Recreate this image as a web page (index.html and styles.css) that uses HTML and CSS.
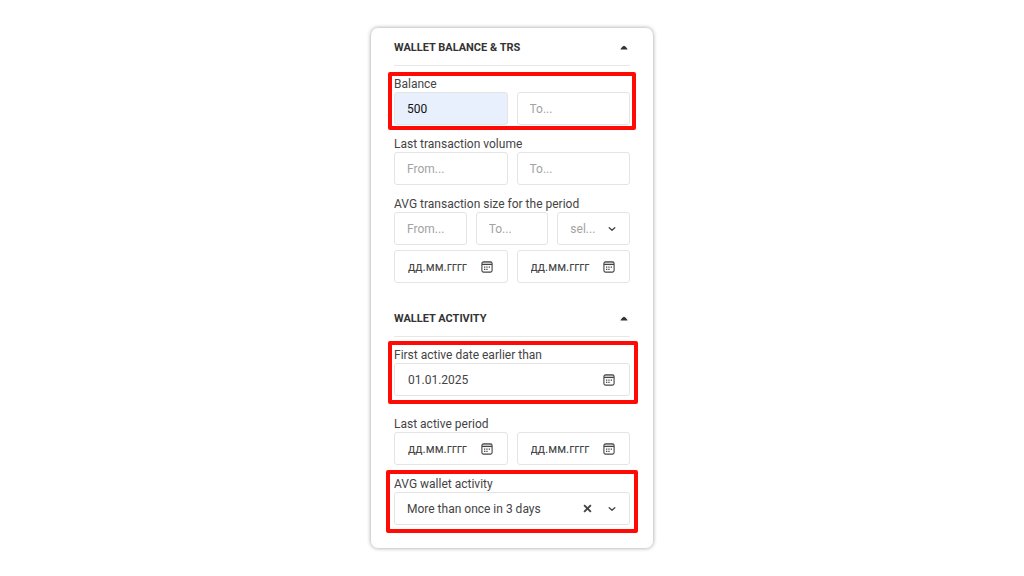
FILE: index.html
```html
<!DOCTYPE html>
<html lang="en">
<head>
  <meta charset="UTF-8" />
  <meta name="viewport" content="width=device-width, initial-scale=1" />
  <title>Wallet filters</title>
  <link rel="stylesheet" href="styles.css">
</head>
<body>
  <svg class="sprite" aria-hidden="true">
    <symbol id="icon-caret" viewBox="0 0 8 5">
      <path d="M0.5 4.5 C0.5 3.6 3 1 4 0.8 C5 1 7.5 3.6 7.5 4.5 Z" fill="currentColor"/>
    </symbol>
    <symbol id="icon-chevron" viewBox="0 0 8 8">
      <path d="M1.2 2.7 L4 5.3 L6.8 2.7" fill="none" stroke="currentColor" stroke-width="1.3" stroke-linecap="round" stroke-linejoin="round"/>
    </symbol>
    <symbol id="icon-cross" viewBox="0 0 8 8">
      <path d="M1 1 L7 7 M7 1 L1 7" fill="none" stroke="currentColor" stroke-width="1.7"/>
    </symbol>
    <symbol id="icon-calendar" viewBox="0 0 12 12">
      <rect x="0.9" y="0.9" width="10.2" height="10.2" rx="1.6" fill="none" stroke="currentColor" stroke-width="1.1"/>
      <path d="M1 3.5 H11" stroke="currentColor" stroke-width="1.1"/>
      <path d="M1 1h10v2.5h-10z" fill="currentColor" opacity="0.25"/>
      <path d="M5.3 5.4h1.3v1.3h-1.3z M7.7 5.4h1.3v1.3h-1.3z M3 7.7h1.3v1.3h-1.3z M5.3 7.7h1.3v1.3h-1.3z M3 5.4h1.3v1.3h-1.3z" fill="currentColor"/>
    </symbol>
  </svg>

  <form class="panel">
    <section class="section">
      <h2 class="section-title">
        <button type="button" class="toggle" aria-expanded="true">
          WALLET BALANCE &amp; TRS
          <svg class="caret"><use href="#icon-caret"/></svg>
        </button>
      </h2>

      <div class="group marked marked-balance">
        <label for="balance-from">Balance</label>
        <div class="row">
          <div class="field filled"><input id="balance-from" type="text" value="500"></div>
          <div class="field"><input type="text" placeholder="To..." aria-label="Balance to"></div>
        </div>
      </div>

      <div class="group">
        <label for="volume-from">Last transaction volume</label>
        <div class="row">
          <div class="field"><input id="volume-from" type="text" placeholder="From..."></div>
          <div class="field"><input type="text" placeholder="To..." aria-label="Volume to"></div>
        </div>
      </div>

      <div class="group">
        <label for="size-from">AVG transaction size for the period</label>
        <div class="row">
          <div class="field"><input id="size-from" type="text" placeholder="From..."></div>
          <div class="field"><input type="text" placeholder="To..." aria-label="Size to"></div>
          <div class="field">
            <select class="empty" aria-label="Token"><option>sel...</option></select>
            <svg class="chevron"><use href="#icon-chevron"/></svg>
          </div>
        </div>
        <div class="row">
          <div class="field date">
            <input type="text" placeholder="дд.мм.гггг" aria-label="Period start">
            <button type="button" class="icon-btn" aria-label="Open calendar"><svg class="calendar"><use href="#icon-calendar"/></svg></button>
          </div>
          <div class="field date">
            <input type="text" placeholder="дд.мм.гггг" aria-label="Period end">
            <button type="button" class="icon-btn" aria-label="Open calendar"><svg class="calendar"><use href="#icon-calendar"/></svg></button>
          </div>
        </div>
      </div>
    </section>

    <section class="section">
      <h2 class="section-title">
        <button type="button" class="toggle" aria-expanded="true">
          WALLET ACTIVITY
          <svg class="caret"><use href="#icon-caret"/></svg>
        </button>
      </h2>

      <div class="group marked marked-first">
        <label for="first-active">First active date earlier than</label>
        <div class="row">
          <div class="field date">
            <input id="first-active" type="text" value="01.01.2025">
            <button type="button" class="icon-btn" aria-label="Open calendar"><svg class="calendar"><use href="#icon-calendar"/></svg></button>
          </div>
        </div>
      </div>

      <div class="group">
        <label for="last-active">Last active period</label>
        <div class="row">
          <div class="field date">
            <input id="last-active" type="text" placeholder="дд.мм.гггг">
            <button type="button" class="icon-btn" aria-label="Open calendar"><svg class="calendar"><use href="#icon-calendar"/></svg></button>
          </div>
          <div class="field date">
            <input type="text" placeholder="дд.мм.гггг" aria-label="Last active period end">
            <button type="button" class="icon-btn" aria-label="Open calendar"><svg class="calendar"><use href="#icon-calendar"/></svg></button>
          </div>
        </div>
      </div>

      <div class="group marked marked-activity">
        <label for="avg-activity">AVG wallet activity</label>
        <div class="row">
          <div class="field">
            <select id="avg-activity"><option>More than once in 3 days</option></select>
            <button type="button" class="icon-btn clear" aria-label="Clear"><svg class="cross"><use href="#icon-cross"/></svg></button>
            <svg class="chevron"><use href="#icon-chevron"/></svg>
          </div>
        </div>
      </div>
    </section>
  </form>
</body>
</html>
```
FILE: styles.css
```css
:root {
  --text: #444;
  --title: #333;
  --muted: #a3a3a3;
  --border: #e4e4e4;
  --autofill: #e8f0fe;
  --mark: #ff0a05;
}

* { margin: 0; padding: 0; box-sizing: border-box; }

body {
  min-height: 100vh;
  display: flex;
  align-items: center;
  justify-content: center;
  background: #fff;
  color: var(--text);
  font-family: Roboto, "Liberation Sans", sans-serif;
  font-size: 12px;
}

.sprite {
  position: absolute;
  width: 0;
  height: 0;
}

.panel {
  width: 100%;
  max-width: 282px;
  padding: 0 23px 23px;
  background: #fff;
  border-radius: 7px;
  box-shadow: 0 0 4px rgba(0, 0, 0, 0.4);
}

.section + .section { margin-top: 16px; }

.section-title {
  border-bottom: 1px solid #e8e8e8;
  margin-bottom: 8px;
}

.toggle {
  width: 100%;
  display: flex;
  align-items: center;
  justify-content: space-between;
  padding: 12px 2px 9px 0;
  border: none;
  background: none;
  color: var(--title);
  font: bold 11px/16px Roboto, "Liberation Sans", sans-serif;
  cursor: pointer;
}

.group { position: relative; }
.group + .group { margin-top: 9px; }

label {
  display: block;
  padding-top: 2px;
  line-height: 16px;
}

.row {
  display: flex;
  gap: 9px;
}

.row + .row { margin-top: 5px; }

.field {
  flex: 1 1 0;
  min-width: 0;
  height: 33px;
  display: flex;
  align-items: center;
  padding: 0 13px 0 12px;
  border: 1px solid var(--border);
  border-radius: 3px;
  background: #fff;
}

.field.date { padding: 0 14px 0 13px; }

.field input,
.field select {
  flex: 1;
  width: 0;
  min-width: 0;
  border: none;
  outline: none;
  background: none;
  color: var(--text);
  font: inherit;
  appearance: none;
}

.field input::placeholder { color: var(--muted); opacity: 1; }
.field .empty { color: var(--muted); }
.field.filled { background: var(--autofill); }
.field.filled input { color: #111; }
.field.date input::placeholder { color: var(--text); }

.icon-btn {
  display: flex;
  border: none;
  background: none;
  color: var(--text);
  cursor: pointer;
}

.clear { margin-right: 16px; }

.caret { width: 8px; height: 5px; margin-bottom: 2px; }
.chevron { width: 8px; height: 8px; pointer-events: none; }
.cross { width: 9px; height: 9px; }
.calendar { width: 12px; height: 12px; }

/* Highlight frames drawn over the form */
.marked::after {
  content: "";
  position: absolute;
  border: 4px solid var(--mark);
  border-radius: 2px;
  pointer-events: none;
}

.marked-balance::after { inset: -2px -6px -5px; }
.marked-first::after { inset: -4px -8px -8px -6px; }
.marked-activity::after { inset: -4px -8px -8px; }

/* room for the bottom edge of the frame */
.marked-first + .group { margin-top: 18px; }
```
